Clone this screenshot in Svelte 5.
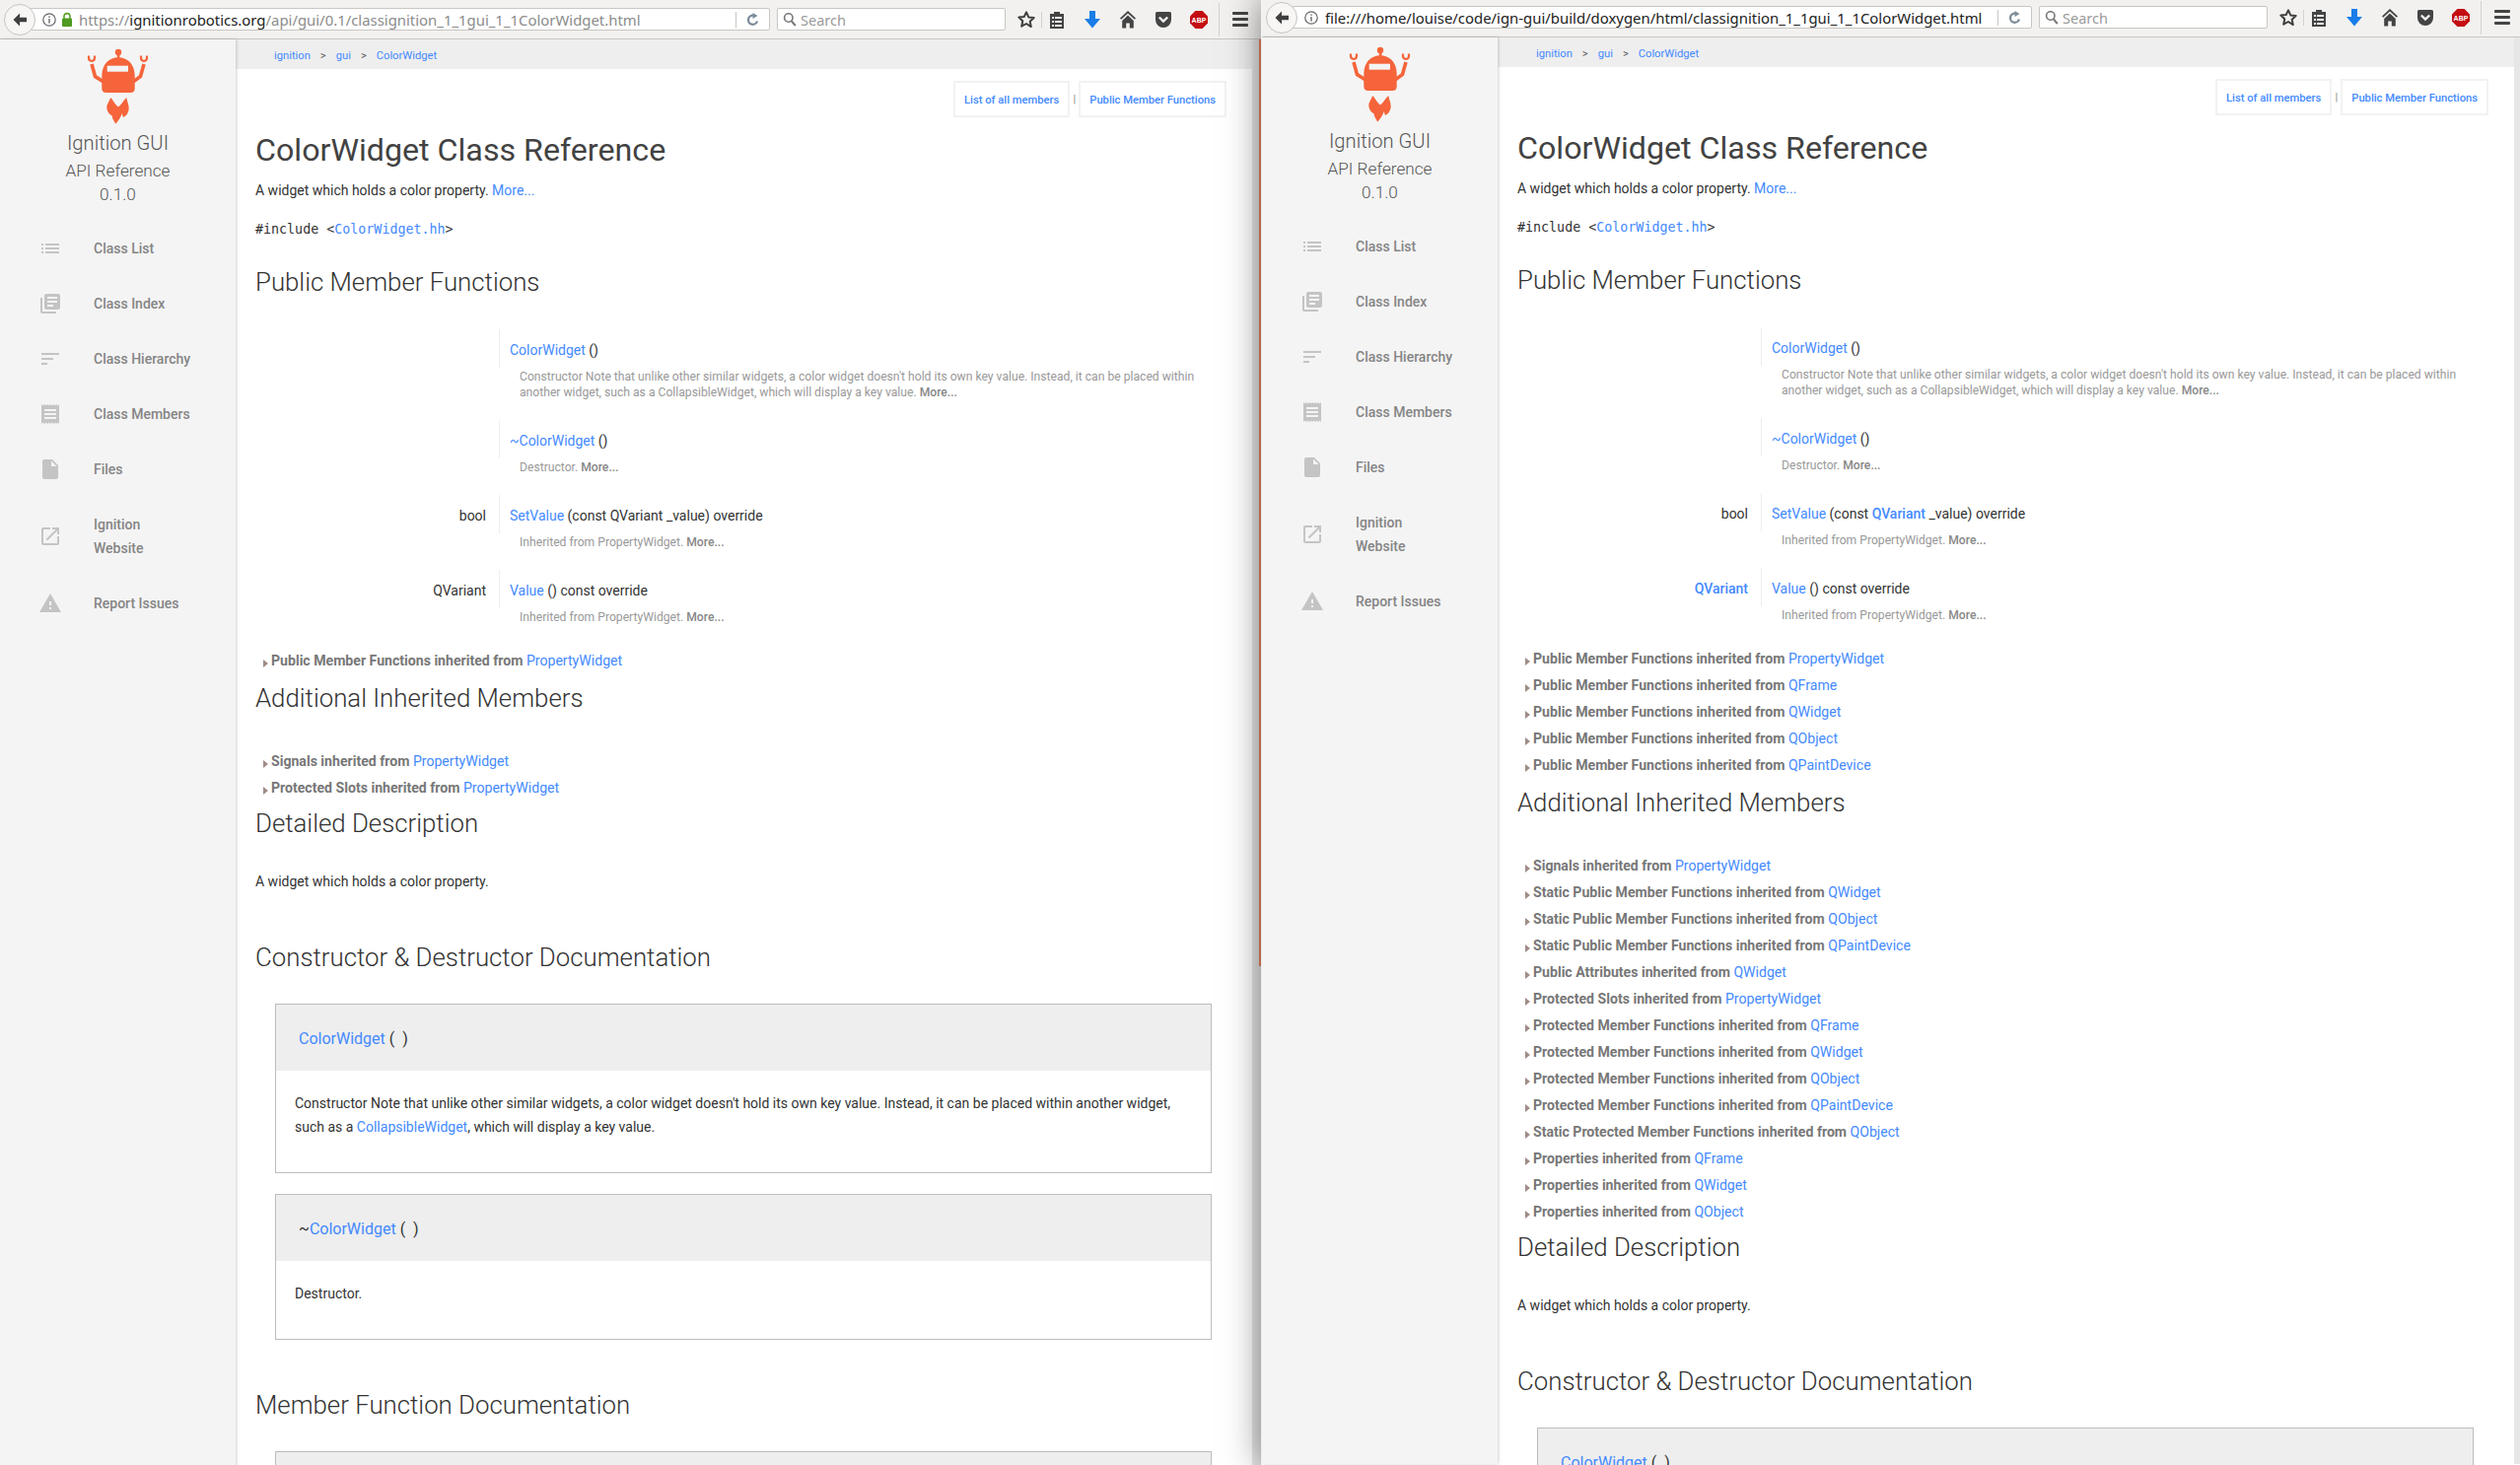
<script>
  const navItems = [
    { label: 'Class List', d: 'M3 13h2v-2H3v2zm0 4h2v-2H3v2zm0-8h2V7H3v2zm4 4h14v-2H7v2zm0 4h14v-2H7v2zM7 7v2h14V7H7z' },
    { label: 'Class Index', d: 'M4 6H2v14c0 1.1.9 2 2 2h14v-2H4V6zm16-4H8c-1.1 0-2 .9-2 2v12c0 1.1.9 2 2 2h12c1.1 0 2-.9 2-2V4c0-1.1-.9-2-2-2zm-1 9H9V9h10v2zm-4 4H9v-2h6v2zm4-8H9V5h10v2z' },
    { label: 'Class Hierarchy', d: 'M3 18h6v-2H3v2zM3 6v2h18V6H3zm0 7h12v-2H3v2z' },
    { label: 'Class Members', d: 'M18 17H6v-2h12v2zm0-4H6v-2h12v2zm0-4H6V7h12v2zM3 22l1.5-1.5L6 22l1.5-1.5L9 22l1.5-1.5L12 22l1.5-1.5L15 22l1.5-1.5L18 22l1.5-1.5L21 22V2l-1.5 1.5L18 2l-1.5 1.5L15 2l-1.5 1.5L12 2l-1.5 1.5L9 2 7.5 3.5 6 2 4.5 3.5 3 2v20z' },
    { label: 'Files', d: 'M6 2c-1.1 0-1.99.9-1.99 2L4 20c0 1.1.89 2 1.99 2H18c1.1 0 2-.9 2-2V8l-6-6H6zm7 7V3.5L18.5 9H13z' },
    { label: 'Ignition Website', narrow: true, d: 'M19 19H5V5h7V3H5c-1.11 0-2 .9-2 2v14c0 1.1.89 2 2 2h14c1.1 0 2-.9 2-2v-7h-2v7zM14 3v2h3.59l-9.83 9.83 1.41 1.41L19 6.41V10h2V3h-7z' },
    { label: 'Report Issues', d: 'M1 21h22L12 2 1 21zm12-3h-2v-2h2v2zm0-4h-2v-4h2v4z' }
  ];

  const PM = 'Public Member Functions';
  const windows = [
    {
      id: 'remote',
      linked: false,
      publicInherited: [[PM, 'PropertyWidget']],
      additional: [
        ['Signals', 'PropertyWidget'],
        ['Protected Slots', 'PropertyWidget']
      ]
    },
    {
      id: 'local',
      linked: true,
      publicInherited: [
        [PM, 'PropertyWidget'], [PM, 'QFrame'], [PM, 'QWidget'], [PM, 'QObject'], [PM, 'QPaintDevice']
      ],
      additional: [
        ['Signals', 'PropertyWidget'],
        ['Static Public Member Functions', 'QWidget'],
        ['Static Public Member Functions', 'QObject'],
        ['Static Public Member Functions', 'QPaintDevice'],
        ['Public Attributes', 'QWidget'],
        ['Protected Slots', 'PropertyWidget'],
        ['Protected Member Functions', 'QFrame'],
        ['Protected Member Functions', 'QWidget'],
        ['Protected Member Functions', 'QObject'],
        ['Protected Member Functions', 'QPaintDevice'],
        ['Static Protected Member Functions', 'QObject'],
        ['Properties', 'QFrame'],
        ['Properties', 'QWidget'],
        ['Properties', 'QObject']
      ]
    }
  ];
</script>

{#snippet inherited(rows)}
  <div class="inherit-list">
    {#each rows as [kind, from]}
      <div class="inherit-row"><span class="arrow"></span>{kind} inherited from <a href="#top">{from}</a></div>
    {/each}
  </div>
{/snippet}

{#snippet toolbar(win)}
  <header class="toolbar">
    <button class="back" aria-label="Back">
      <svg width="18" height="18" viewBox="0 0 18 18"><path d="M9 2.5 2.5 9 9 15.500V11.200h7V6.800H9z" fill="#3f3f3f" /></svg>
    </button>
    <div class="urlbar">
      <svg class="info" width="16" height="16" viewBox="0 0 16 16"><circle cx="8" cy="8" r="6.200" fill="none" stroke="#666" stroke-width="1.200" /><rect x="7.300" y="7" width="1.400" height="4.600" fill="#666" /><rect x="7.300" y="4.400" width="1.400" height="1.500" fill="#666" /></svg>
      {#if win.id === 'remote'}
        <svg class="lock" width="12" height="16" viewBox="0 0 12 16"><path d="M3 7V4.600a3 3 0 0 1 6 0V7" fill="none" stroke="#5aa02c" stroke-width="1.600" /><rect x="1" y="6.600" width="10" height="8.400" rx="1" fill="#4f9a22" /></svg>
        <span class="url"><span class="dim">https://</span>ignitionrobotics.org<span class="dim">/api/gui/0.1/classignition_1_1gui_1_1ColorWidget.html</span></span>
      {:else}
        <span class="url">file:///home/louise/code/ign-gui/build/doxygen/html/classignition_1_1gui_1_1ColorWidget.html</span>
      {/if}
      <span class="url-sep"></span>
      <svg class="reload" width="14" height="16" viewBox="0 0 14 16"><path d="M11 9.500A4.600 4.600 0 1 1 7 3.600" fill="none" stroke="#7c8b99" stroke-width="2.200" /><path d="M6.500 1v6l5-3z" fill="#7c8b99" /></svg>
    </div>
    <div class="searchbar">
      <svg width="14" height="16" viewBox="0 0 14 16"><circle cx="5.800" cy="6" r="4.200" fill="none" stroke="#777" stroke-width="1.600" /><path d="m8.800 9.400 4 4.600" stroke="#777" stroke-width="2" /></svg>
      <span>Search</span>
    </div>
    <svg class="star" width="20" height="20" viewBox="0 0 20 20"><path d="m10 2.400 2.300 5 5.400.6-4 3.700 1.100 5.400L10 14l-4.800 2.700 1.100-5.400-4-3.700 5.400-.6z" fill="none" stroke="#3f3f3f" stroke-width="2" stroke-linejoin="round" /></svg>
    <span class="tool-sep first"></span>
    <span class="tool clip">
      <svg width="16" height="20" viewBox="0 0 16 20"><path d="M1 4h4V2h6v2h4v15H1z" fill="#444" /><path d="M3 7h2v2H3zm3 0h7v2H6zm-3 4h2v2H3zm3 0h7v2H6zm-3 4h2v2H3zm3 0h7v2H6z" fill="#f2f1ef" /></svg>
    </span>
    <span class="tool">
      <svg width="18" height="20" viewBox="0 0 18 20"><path d="M6 1h6v8h5l-8 9.500L1 9h5z" fill="#1a7de8" /></svg>
    </span>
    <span class="tool">
      <svg width="18" height="20" viewBox="0 0 18 20"><path d="M9 1 1 8.600l1.200 1.200L9 3.600l6.800 6.200L17 8.600z" fill="#444" /><path d="M9 5.600 3.200 11v7.400h4v-5h3.600v5h4V11z" fill="#444" /></svg>
    </span>
    <span class="tool">
      <svg width="18" height="18" viewBox="0 0 18 18"><path d="M1 2.500A1.500 1.500 0 0 1 2.500 1h13A1.500 1.500 0 0 1 17 2.500V9a8 8 0 0 1-16 0z" fill="#444" /><path d="m4.800 6.500 4.200 4 4.200-4" fill="none" stroke="#f2f1ef" stroke-width="2.400" /></svg>
    </span>
    <span class="tool">
      <svg width="18" height="18" viewBox="0 0 18 18"><path d="M5.400 0h7.200L18 5.400v7.200L12.600 18H5.400L0 12.600V5.400z" fill="#c40d12" /><text x="9" y="11.600" text-anchor="middle" class="abp">ABP</text></svg>
    </span>
    <span class="tool-sep last"></span>
    <span class="burger"><i></i><i></i><i></i></span>
  </header>
{/snippet}

{#snippet sidebar()}
  <aside class="sidebar">
    <svg class="logo" width="80" height="90" viewBox="0 0 80 90">
      <g fill="#f5643a">
        <circle cx="40" cy="9" r="3.200" />
        <rect x="38.800" y="10" width="2.600" height="6" />
        <path d="M23.300 33C23.300 21 31 14.300 40 14.300S56.700 21 56.700 33v12.500q0 4.500-4.500 4.500H27.800q-4.500 0-4.500-4.500z" />
        <path d="M32 55c3 2.500 4 6.500 8 9.500 3.800-2.700 5-6.500 8.300-9.500.4 3.500 2.300 6.500 2.400 10.500.1 4-2.200 8-5.700 9.500-.7-1.500-.8-2.500-1.300-4-1 4-3.500 7-6.400 10.800-1.400-3-3.400-5-3.800-8.500-2-.7-5-4-5.200-8.200C28.200 61.500 31 59 32 55z" />
      </g>
      <g fill="none" stroke="#f5643a">
        <path d="M25 39 16.500 33.500 13 21" stroke-width="3.600" />
        <path d="M55 39 62.500 33.500 66 21" stroke-width="3.600" />
        <path d="M10 12.500v2.300q0 2.700 3 3.200 3-.5 3-3.200v-2.300" stroke-width="2.200" />
        <path d="M63 12.500v2.300q0 2.700 3 3.200 3-.5 3-3.200v-2.300" stroke-width="2.200" />
      </g>
      <rect x="28.700" y="22.700" width="21.300" height="6" fill="#f4f4f4" />
    </svg>
    <div class="brand">Ignition GUI</div>
    <div class="brand-sub">API Reference</div>
    <div class="brand-sub">0.1.0</div>
    <nav class="nav">
      {#each navItems as item}
        <a class="nav-item" href="#top">
          <svg width="24" height="24" viewBox="0 0 24 24"><path d={item.d} fill="#c4c4c4" /></svg>
          <span class:narrow={item.narrow}>{item.label}</span>
        </a>
      {/each}
    </nav>
  </aside>
{/snippet}

{#snippet content(win)}
  <main class="content">
    <div class="crumbs">
      <a href="#top">ignition</a><b>&gt;</b><a href="#top">gui</a><b>&gt;</b><a href="#top">ColorWidget</a>
    </div>
    <div class="page">
      <div class="tabs">
        <a class="tab" href="#top">List of all members</a>
        <span class="tab-sep">|</span>
        <a class="tab" href="#top">Public Member Functions</a>
      </div>
      <h1>ColorWidget Class Reference</h1>
      <p class="brief">A widget which holds a color property. <a href="#top">More...</a></p>
      <p class="include">#include &lt;<a href="#top">ColorWidget.hh</a>&gt;</p>

      <h2 class="h-public">Public Member Functions</h2>
      <div class="members">
        <div class="member">
          <div class="type"></div>
          <div class="sig"><a href="#top">ColorWidget</a> ()</div>
        </div>
        <p class="member-doc">Constructor Note that unlike other similar widgets, a color widget doesn't hold its own key value. Instead, it can be placed within another widget, such as a CollapsibleWidget, which will display a key value. <b>More...</b></p>
        <div class="member">
          <div class="type"></div>
          <div class="sig"><a href="#top">~ColorWidget</a> ()</div>
        </div>
        <p class="member-doc">Destructor. <b>More...</b></p>
        <div class="member">
          <div class="type">bool</div>
          <div class="sig"><a href="#top">SetValue</a> (const {#if win.linked}<a class="strong" href="#top">QVariant</a>{:else}QVariant{/if} _value) override</div>
        </div>
        <p class="member-doc">Inherited from PropertyWidget. <b>More...</b></p>
        <div class="member">
          <div class="type">{#if win.linked}<a class="strong" href="#top">QVariant</a>{:else}QVariant{/if}</div>
          <div class="sig"><a href="#top">Value</a> () const override</div>
        </div>
        <p class="member-doc">Inherited from PropertyWidget. <b>More...</b></p>
      </div>
      {@render inherited(win.publicInherited)}

      <h2 class="h-additional">Additional Inherited Members</h2>
      {@render inherited(win.additional)}

      <h2 class="h-detail">Detailed Description</h2>
      <p class="detail">A widget which holds a color property.</p>

      <h2 class="h-ctor">Constructor &amp; Destructor Documentation</h2>
      <section class="doc">
        <div class="doc-head"><a href="#top">ColorWidget</a> ( &nbsp;)</div>
        <div class="doc-body">Constructor Note that unlike other similar widgets, a color widget doesn't hold its own key value. Instead, it can be placed within another widget, such as a <a href="#top">CollapsibleWidget</a>, which will display a key value.</div>
      </section>
      <section class="doc second">
        <div class="doc-head">~<a href="#top">ColorWidget</a> ( &nbsp;)</div>
        <div class="doc-body">Destructor.</div>
      </section>

      <h2 class="h-func">Member Function Documentation</h2>
      <section class="doc">
        <div class="doc-head"></div>
      </section>
    </div>
  </main>
{/snippet}

<div class="desktop" id="top">
  {#each windows as win}
    <div class="window {win.id}">
      {@render toolbar(win)}
      <div class="window-body">
        {@render sidebar()}
        {@render content(win)}
        <div class="scrollbar">
          {#if win.id === 'remote'}<div class="thumb"></div>{/if}
        </div>
      </div>
    </div>
  {/each}
</div>

<style>
  :global(body) {
    margin: 0;
    background: #fff;
  }
  .desktop {
    display: flex;
    width: 2556px;
    height: 1486px;
    overflow: hidden;
    font-family: Roboto, "Liberation Sans", sans-serif;
    font-size: 14px;
    color: #333;
  }
  a {
    color: #448aff;
    text-decoration: none;
  }
  .window {
    width: 1280px;
    flex-shrink: 0;
    background: #fff;
  }
  .window.local {
    margin-top: -2px;
    height: 1488px;
    position: relative;
    box-shadow: -1px 0 0 #f4f4f4, 0 0 34px rgba(0, 0, 0, 0.5);
  }

  /* browser chrome */
  .toolbar {
    height: 39px;
    display: flex;
    align-items: center;
    background: #f2f1ef;
    border-bottom: 1px solid #c9c7c3;
    font-family: "Noto Sans", "Open Sans", sans-serif;
    font-size: 14.9px;
  }
  .back {
    width: 32px;
    height: 32px;
    margin-left: 4px;
    padding: 0;
    display: flex;
    align-items: center;
    justify-content: center;
    background: #f7f6f5;
    border: 1px solid #c6c4c0;
    border-radius: 50%;
    position: relative;
    z-index: 1;
  }
  .urlbar {
    width: 751px;
    height: 23px;
    margin-left: -6px;
    padding-left: 11px;
    box-sizing: border-box;
    display: flex;
    align-items: center;
    background: #fff;
    border: 1px solid #c9c7c3;
    border-radius: 2px;
  }
  .urlbar .lock {
    margin-left: 4px;
  }
  .url {
    margin-left: 6px;
    min-width: 0;
    flex: 1;
    overflow: hidden;
    white-space: nowrap;
    color: #222;
  }
  .dim {
    color: #8c8c8c;
  }
  .url-sep {
    width: 1px;
    height: 16px;
    background: #c9c7c3;
    margin-right: 10px;
  }
  .reload {
    margin-right: 9px;
  }
  .searchbar {
    width: 232px;
    height: 23px;
    margin-left: 7px;
    padding-left: 5px;
    box-sizing: border-box;
    display: flex;
    align-items: center;
    gap: 4px;
    background: #fff;
    border: 1px solid #c9c7c3;
    border-radius: 2px;
    font-size: 14.5px;
    color: #9a9a9a;
  }
  .star {
    margin-left: 11px;
  }
  .tool-sep {
    width: 1px;
    height: 16px;
    background: #d4d2ce;
  }
  .tool-sep.first {
    margin-left: 5px;
  }
  .tool-sep.last {
    height: 34px;
    margin-left: 2px;
  }
  .tool {
    width: 36px;
    height: 20px;
    display: flex;
    align-items: center;
    justify-content: center;
  }
  .tool.clip {
    margin-left: -3px;
  }
  .abp {
    font-family: "Liberation Sans", sans-serif;
    font-size: 7px;
    font-weight: 700;
    fill: #fff;
  }
  .burger {
    width: 16px;
    margin-left: 13px;
    display: flex;
    flex-direction: column;
    gap: 3px;
  }
  .burger i {
    height: 3px;
    border-radius: 1px;
    background: #444;
  }

  /* doxygen page */
  .window-body {
    display: flex;
    height: 1447px;
  }
  .sidebar {
    width: 239px;
    flex-shrink: 0;
    padding-top: 4px;
    box-sizing: border-box;
    background: #f4f4f4;
    box-shadow: 1px 0 3px rgba(0, 0, 0, 0.18);
    position: relative;
    text-align: center;
    color: #555;
    font-weight: 300;
  }
  .logo {
    display: block;
    margin-left: 80px;
  }
  .brand {
    font-size: 20.2px;
    line-height: 24px;
    margin-top: -1px;
  }
  .brand-sub {
    font-size: 17.2px;
    line-height: 24px;
    margin-top: 4px;
  }
  .brand-sub + .brand-sub {
    margin-top: 0;
  }
  .nav {
    margin-top: 15px;
    text-align: left;
  }
  .nav-item {
    display: flex;
    align-items: center;
    gap: 32px;
    padding: 16px 0 16px 39px;
    line-height: 24px;
    font-size: 14px;
    font-weight: 500;
    color: #858585;
  }
  .narrow {
    max-width: 70px;
  }
  .content {
    flex: 1;
    min-width: 0;
  }
  .scrollbar {
    width: 10px;
    flex-shrink: 0;
    background: #e6e6e6;
  }
  .thumb {
    width: 3px;
    height: 940px;
    margin-left: 7px;
    background: #ee8462;
  }
  .crumbs {
    height: 30px;
    padding: 2px 0 0 39px;
    box-sizing: border-box;
    display: flex;
    align-items: center;
    background: #eee;
    font-size: 11.2px;
  }
  .crumbs b {
    margin: 0 10px;
    font-weight: 400;
    color: #555;
  }
  .page {
    padding: 12px 21px 0 20px;
  }
  .tabs {
    display: flex;
    justify-content: flex-end;
    align-items: center;
    height: 37px;
    margin-right: 5px;
    font-size: 11.2px;
    font-weight: 500;
  }
  .tab {
    height: 37px;
    padding: 1px 9px 0;
    box-sizing: border-box;
    display: flex;
    align-items: center;
    border: 2px solid #f2f2f2;
  }
  .tab-sep {
    width: 9px;
    text-align: center;
    color: #888;
    font-weight: 400;
  }
  h1 {
    margin: 13px 0 0;
    font-size: 32.2px;
    line-height: 40px;
    font-weight: 400;
    color: #424242;
  }
  h2 {
    font-size: 25.8px;
    line-height: 36px;
    font-weight: 300;
    color: #333;
  }
  p {
    margin: 0;
  }
  .brief {
    margin-top: 9px;
    line-height: 24px;
  }
  .include {
    margin-top: 16px;
    line-height: 24px;
    font-family: "DejaVu Sans Mono", monospace;
    font-size: 13.33px;
  }
  .h-public {
    margin: 23px 0 0;
  }
  .members {
    margin-top: 30px;
    padding-bottom: 3px;
  }
  .member {
    display: flex;
    height: 39px;
    align-items: stretch;
  }
  .type {
    width: 234px;
    padding-right: 13px;
    line-height: 42px;
    text-align: right;
    border-right: 1px solid #eee;
  }
  .sig {
    padding-left: 10px;
    line-height: 42px;
  }
  .strong {
    font-weight: 500;
  }
  .member-doc {
    margin: 1px 0 20px 268px;
    max-width: 690px;
    font-size: 12.15px;
    line-height: 16px;
    color: #999;
  }
  .member-doc b {
    font-weight: 500;
    color: #888;
  }
  .inherit-row {
    line-height: 27px;
    padding-left: 8px;
    font-size: 14.1px;
    font-weight: 700;
    color: #777;
  }
  .inherit-row a {
    font-weight: 400;
  }
  .arrow {
    display: inline-block;
    width: 0;
    height: 0;
    margin-right: 3px;
    vertical-align: -2px;
    border-left: 5px solid #a08c88;
    border-top: 4.5px solid transparent;
    border-bottom: 4.5px solid transparent;
  }
  .h-additional {
    margin: 6px 0 33px;
  }
  .h-detail {
    margin: 4px 0 0;
  }
  .detail {
    margin-top: 29px;
    line-height: 24px;
  }
  .h-ctor {
    margin: 47px 0 29px;
  }
  .doc {
    margin: 0 20px;
    border: 1px solid #bdbdbd;
  }
  .doc.second {
    margin-top: 21px;
  }
  .doc-head {
    height: 67px;
    padding-left: 23px;
    line-height: 70px;
    box-sizing: border-box;
    background: #eee;
    font-size: 16px;
  }
  .doc-body {
    padding: 21px 40px 34px 19px;
    line-height: 24px;
  }
  .h-func {
    margin: 48px 0 29px;
  }
</style>
